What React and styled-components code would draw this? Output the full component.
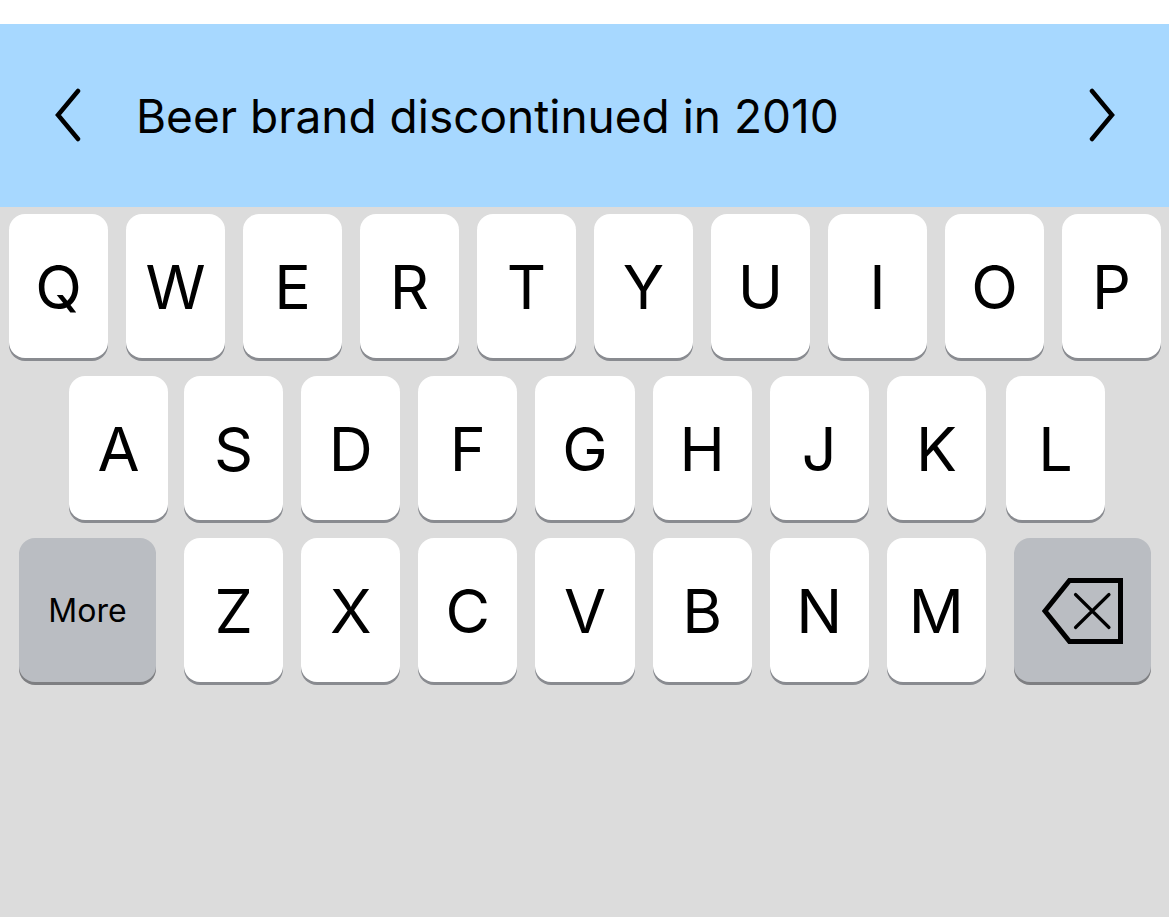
import React from 'react';
import styled, { createGlobalStyle } from 'styled-components';

const GlobalStyles = createGlobalStyle`
  * {
    box-sizing: border-box;
  }
  body {
    margin: 0;
    background: #fff;
    color: #000;
    font-family: Inter, 'Liberation Sans', sans-serif;
  }
  button {
    border: 0;
    margin: 0;
    padding: 0;
    color: inherit;
    font: inherit;
    cursor: pointer;
  }
`;

const PageStyles = styled.main`
  display: flex;
  flex-direction: column;
  min-height: 100vh;
  padding-top: 24px;
`;

const ClueBarStyles = styled.header`
  display: flex;
  align-items: center;
  padding: 63px 47px 64px 48px;
  background: #a7d8ff;
`;

const ClueText = styled.h1`
  flex: 1;
  margin: 0 0 0 48px;
  padding-top: 2px;
  font-size: 46px;
  font-weight: 400;
  line-height: 54px;
`;

const ArrowButton = styled.button`
  display: flex;
  justify-content: center;
  width: 40px;
  background: transparent;
`;

const KeyboardStyles = styled.section`
  display: flex;
  flex: 1;
  flex-direction: column;
  gap: 18px;
  padding-top: 7px;
  background: #dcdcdc;
`;

const KeyRow = styled.div`
  display: flex;
  padding: ${({ $padding }) => $padding};
`;

const KeyGroup = styled.div`
  display: flex;
  flex: ${({ $grow }) => $grow || 1} 1 0;
  gap: 18px;
  margin: ${({ $margin }) => $margin || 0};
`;

const Key = styled.button`
  display: flex;
  flex: ${({ $grow }) => $grow || 1} 1 0;
  align-items: center;
  justify-content: center;
  min-width: 0;
  height: 144px;
  padding-top: 2px;
  border-radius: 16px;
  background: #fff;
  box-shadow: 0 3px 0 #898b90;
  font-size: 61px;
  line-height: 72px;
`;

const ActionKey = styled(Key)`
  background: #babdc2;
  box-shadow: 0 3px 0 #7e7f82;
  font-size: 32px;
`;

function Arrow({ label, points }) {
  return (
    <ArrowButton type="button" aria-label={label}>
      <svg width="28" height="54" viewBox="0 0 28 54" fill="none">
        <polyline
          points={points}
          stroke="#000"
          strokeWidth="4.5"
          strokeLinecap="round"
        />
      </svg>
    </ArrowButton>
  );
}

function BackspaceIcon() {
  return (
    <svg width="82" height="66" viewBox="0 0 82 66" fill="none" stroke="#000">
      <path d="M3 33 L27.5 2.5 H78.5 V63.5 H27.5 Z" strokeWidth="5" />
      <path
        d="M33.5 16.5 L67 49.5 M67 16.5 L33.5 49.5"
        strokeWidth="3.2"
        strokeLinecap="round"
      />
    </svg>
  );
}

function Keys({ letters }) {
  return letters.split('').map(letter => (
    <Key key={letter} type="button">
      {letter}
    </Key>
  ));
}

function App() {
  return (
    <>
      <GlobalStyles />
      <PageStyles>
        <ClueBarStyles>
          <Arrow label="Previous clue" points="24,3 4,27 24,51" />
          <ClueText>Beer brand discontinued in 2010</ClueText>
          <Arrow label="Next clue" points="4,3 24,27 4,51" />
        </ClueBarStyles>
        <KeyboardStyles aria-label="Keyboard">
          <KeyRow $padding="0 8px 0 9px">
            <KeyGroup>
              <Keys letters="QWERTYUIOP" />
            </KeyGroup>
          </KeyRow>
          <KeyRow $padding="0 64px 0 69px">
            <Key type="button" $grow={99}>
              A
            </Key>
            <KeyGroup $grow={802} $margin="0 20px 0 16px">
              <Keys letters="SDFGHJK" />
            </KeyGroup>
            <Key type="button" $grow={99}>
              L
            </Key>
          </KeyRow>
          <KeyRow $padding="0 18px 0 19px">
            <ActionKey type="button" $grow={137}>
              More
            </ActionKey>
            <KeyGroup $grow={802} $margin="0 28px">
              <Keys letters="ZXCVBNM" />
            </KeyGroup>
            <ActionKey type="button" aria-label="Delete" $grow={137}>
              <BackspaceIcon />
            </ActionKey>
          </KeyRow>
        </KeyboardStyles>
      </PageStyles>
    </>
  );
}

export default App;
